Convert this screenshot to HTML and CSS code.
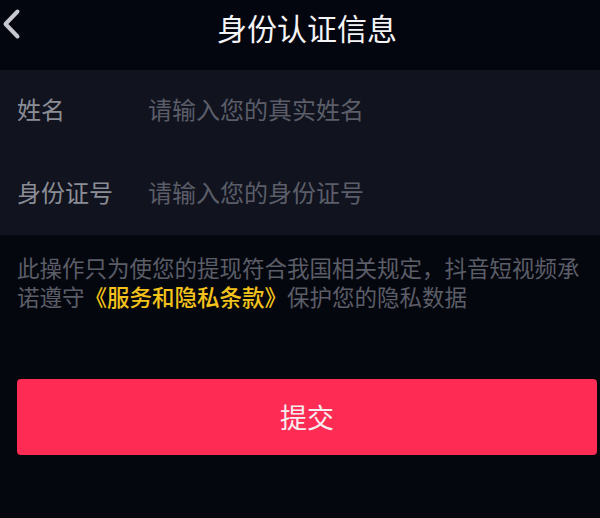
FILE: index.html
```html
<!DOCTYPE html>
<html lang="zh-CN">
<head>
<meta charset="utf-8">
<title>身份认证信息</title>
<link rel="stylesheet" href="styles.css">
</head>
<body>
<div class="page">
  <header class="topbar">
    <button class="back" aria-label="返回">
      <svg viewBox="0 0 20 32" width="20" height="32"><polyline points="16.5,3.5 4.5,16 16.5,28.5" fill="none" stroke="#c8c9cf" stroke-width="4" stroke-linecap="round" stroke-linejoin="round"/></svg>
    </button>
    <h1 class="title">身份认证信息</h1>
    <span></span>
  </header>
  <section class="form">
    <label class="row">
      <span class="label">姓名</span>
      <input class="field" type="text" placeholder="请输入您的真实姓名">
    </label>
    <label class="row">
      <span class="label">身份证号</span>
      <input class="field" type="text" placeholder="请输入您的身份证号">
    </label>
  </section>
  <p class="notice"><span class="line">此操作只为使您的提现符合我国相关规定，抖音短视频承</span><span class="line">诺遵守<a class="link">《服务和隐私条款》</a>保护您的隐私数据</span></p>
  <div class="actions">
    <button class="submit">提交</button>
  </div>
</div>
</body>
</html>
```
FILE: styles.css
```css
* { box-sizing: border-box; }
html, body { margin: 0; padding: 0; }
body {
  background: #05070f;
  font-family: "Noto Sans CJK SC", "Noto Sans", sans-serif;
  width: 600px;
  height: 518px;
  overflow: hidden;
}
.page { display: flex; flex-direction: column; }
.topbar {
  height: 70px;
  display: grid;
  grid-template-columns: 30px 1fr 16px;
  align-items: start;
  background: #04060f;
}
.back {
  margin: 8px 0 0 1px;
  padding: 0;
  border: 0;
  background: none;
  width: 20px;
  height: 32px;
  display: block;
}
.back svg { display: block; }
.title {
  margin: 0;
  padding-top: 10px;
  text-align: center;
  font-size: 30px;
  line-height: 34px;
  font-weight: 400;
  color: #f4f4f6;
}
.form {
  background: #11131e;
  height: 165px;
  display: flex;
  flex-direction: column;
}
.row {
  height: 83px;
  display: grid;
  grid-template-columns: 130px 1fr;
  align-items: center;
  padding: 0 17px 4px 17px;
}
.row + .row { padding-top: 2px; padding-bottom: 6px; }
.label {
  font-size: 24px;
  color: #8b8d96;
  line-height: 30px;
}
.field {
  border: 0;
  background: transparent;
  outline: none;
  font-family: inherit;
  font-size: 24px;
  line-height: 30px;
  color: #d0d1d6;
  padding: 0 0 0 1px;
  margin: 0;
  width: 100%;
}
.field::placeholder { color: #5b5e69; }
.notice {
  margin: 0;
  padding: 18px 17px 0 17px;
  font-size: 22.5px;
  line-height: 29px;
  color: #5b5d67;
}
.line { display: block; white-space: nowrap; }
.link {
  color: #f3c31b;
  font-weight: 500;
}
.actions {
  padding: 68px 3px 0 17px;
}
.submit {
  width: 100%;
  height: 76px;
  border: 0;
  border-radius: 4px;
  background: #fe2c55;
  color: #f4eef0;
  font-family: inherit;
  font-size: 27px;
  line-height: 30px;
  padding: 0;
}
```
